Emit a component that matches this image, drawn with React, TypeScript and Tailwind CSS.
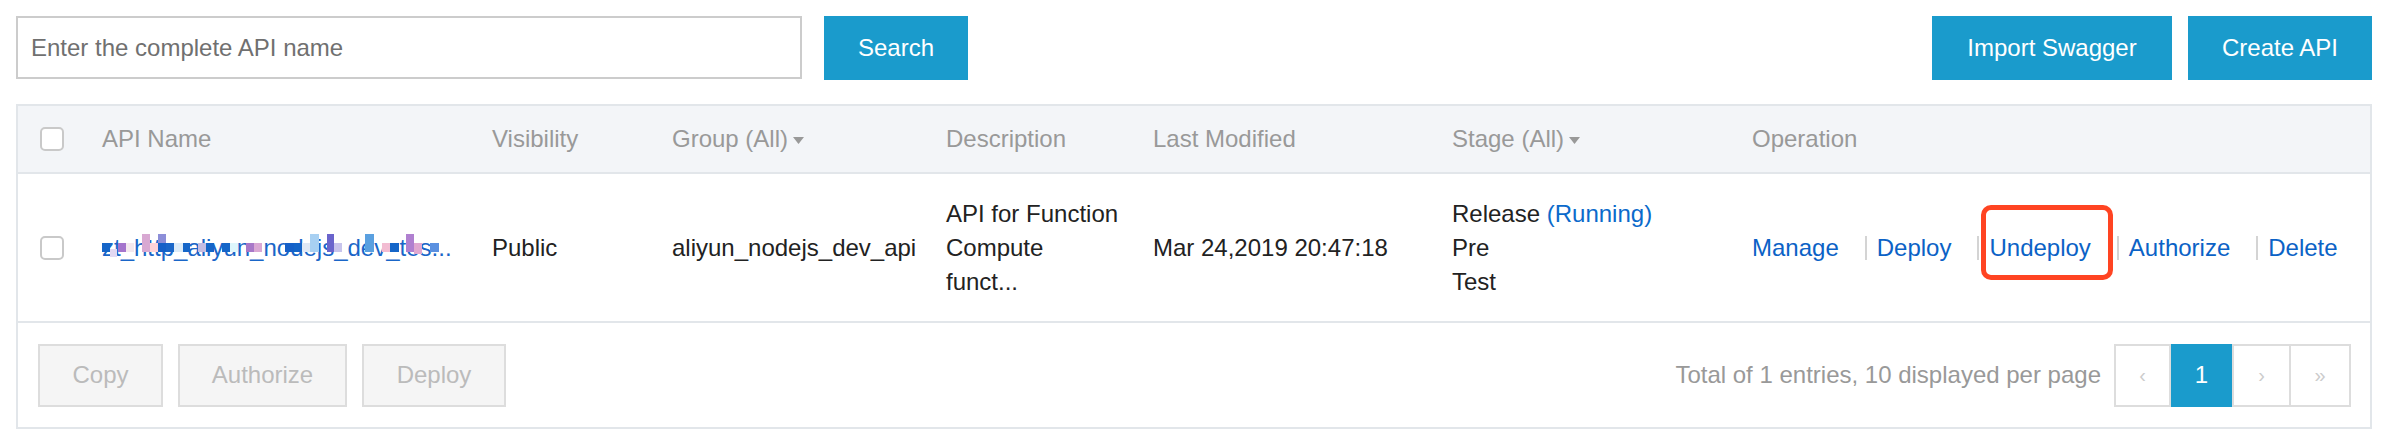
import React from "react";

const blocks: [number, number, number, number, string][] = [
  [0, 12, 8, 9, "#1565c8"],
  [8, 18, 7, 8, "#e2d8f2"],
  [16, 12, 8, 9, "#a474cc"],
  [24, 12, 8, 9, "#f4e8ee"],
  [40, 3, 8, 18, "#d8a8d2"],
  [48, 12, 8, 9, "#fdd3d8"],
  [56, 3, 8, 9, "#8c8ed8"],
  [56, 12, 8, 9, "#1560c8"],
  [64, 12, 8, 9, "#1a66c8"],
  [72, 12, 9, 9, "#dcebf8"],
  [81, 12, 7, 9, "#1565c8"],
  [96, 12, 8, 9, "#c4bce2"],
  [104, 12, 8, 9, "#1565c8"],
  [120, 12, 8, 9, "#1565c8"],
  [128, 12, 8, 9, "#ddf6fc"],
  [144, 12, 8, 9, "#a878c8"],
  [152, 12, 8, 9, "#daa8d4"],
  [183, 12, 9, 9, "#1560c8"],
  [192, 12, 8, 9, "#1565c8"],
  [200, 12, 8, 9, "#e0e8f4"],
  [208, 3, 9, 18, "#a8d0f2"],
  [225, 3, 7, 18, "#6a64cc"],
  [232, 12, 8, 9, "#c8c4ec"],
  [263, 3, 9, 18, "#5aa0e0"],
  [280, 12, 8, 9, "#f2bcd2"],
  [288, 12, 9, 9, "#1565c8"],
  [304, 3, 8, 18, "#b080d0"],
  [312, 12, 8, 11, "#e0a8d0"],
  [328, 12, 9, 9, "#5a90e0"],
];

function Caret() {
  return (
    <svg width="11" height="7" viewBox="0 0 11 7" className="ml-[5px] mt-[2px]">
      <path d="M0 0 L11 0 L5.5 7 Z" fill="#999999" />
    </svg>
  );
}

function Checkbox() {
  return <div className="w-[24px] h-[24px] border-2 border-[#c9c9c9] rounded-[5px] bg-white" />;
}

function Sep() {
  return <span className="inline-block w-[2px] h-[24px] bg-[#d4d4d4] ml-[26px] mr-[10px]" />;
}

export default function App() {
  return (
    <div className="w-[2386px] h-[434px] bg-white font-['Liberation_Sans',Arial,sans-serif] text-[24px] text-[#222222]">
      {/* Top bar */}
      <div className="flex items-start pt-[16px] pl-[16px] pr-[14px]">
        <input
          readOnly
          placeholder="Enter the complete API name"
          className="w-[786px] h-[63px] border-2 border-[#cccccc] px-[13px] text-[24px] outline-none placeholder:text-[#707070] bg-white"
        />
        <button className="ml-[22px] h-[64px] w-[144px] bg-[#1a9bcc] text-white text-[24px]">Search</button>
        <div className="flex-1" />
        <button className="h-[64px] w-[240px] bg-[#1a9bcc] text-white text-[24px]">Import Swagger</button>
        <button className="ml-[16px] h-[64px] w-[184px] bg-[#1a9bcc] text-white text-[24px]">Create API</button>
      </div>

      {/* Table */}
      <div className="mt-[24px] ml-[16px] mr-[14px] border-2 border-[#e2e6ea]">
        {/* Header */}
        <div className="grid grid-cols-[84px_390px_180px_274px_207px_299px_300px_1fr] h-[68px] items-center bg-[#f3f5f8] border-b-2 border-[#e2e6ea] text-[#999999]">
          <div className="pl-[22px]"><Checkbox /></div>
          <div>API Name</div>
          <div>Visibility</div>
          <div className="flex items-center">Group (All)<Caret /></div>
          <div>Description</div>
          <div>Last Modified</div>
          <div className="flex items-center">Stage (All)<Caret /></div>
          <div>Operation</div>
        </div>

        {/* Body row */}
        <div className="grid grid-cols-[84px_390px_180px_274px_207px_299px_300px_1fr] h-[149px] items-center border-b-2 border-[#e2e6ea] leading-[34px]">
          <div className="pl-[22px]"><Checkbox /></div>
          <div>
            <span className="relative inline-block whitespace-nowrap text-[#1a66c8]">
              zt_http_aliyun_nodejs_dev_tes...
              {blocks.map(([x, y, w, h, c], i) => (
                <span
                  key={i}
                  className="absolute"
                  style={{ left: x, top: y, width: w, height: h, background: c }}
                />
              ))}
            </span>
          </div>
          <div>Public</div>
          <div>aliyun_nodejs_dev_api</div>
          <div>
            <div>API for Function</div>
            <div>Compute</div>
            <div>funct...</div>
          </div>
          <div>Mar 24,2019 20:47:18</div>
          <div>
            <div>
              Release <span className="text-[#0b6acb]">(Running)</span>
            </div>
            <div>Pre</div>
            <div>Test</div>
          </div>
          <div className="flex items-center text-[#0b62c6]">
            <span>Manage</span>
            <Sep />
            <span>Deploy</span>
            <Sep />
            <span className="relative">
              Undeploy
              <span className="absolute left-[-8px] right-[-22px] top-[-26px] bottom-[-15px] border-[5px] border-[#ff4422] rounded-[10px]" />
            </span>
            <Sep />
            <span>Authorize</span>
            <Sep />
            <span>Delete</span>
          </div>
        </div>

        {/* Footer */}
        <div className="flex items-center justify-between h-[104px] pl-[20px] pr-[19px]">
          <div className="flex gap-[15px]">
            <button className="w-[125px] h-[63px] border-2 border-[#dddddd] bg-[#f5f5f5] text-[#bbbbbb] text-[24px]">Copy</button>
            <button className="w-[169px] h-[63px] border-2 border-[#dddddd] bg-[#f5f5f5] text-[#bbbbbb] text-[24px]">Authorize</button>
            <button className="w-[144px] h-[63px] border-2 border-[#dddddd] bg-[#f5f5f5] text-[#bbbbbb] text-[24px]">Deploy</button>
          </div>
          <div className="flex items-center">
            <span className="text-[#999999] mr-[13px]">Total of 1 entries, 10 displayed per page</span>
            <div className="flex h-[63px]">
              <div className="w-[57px] border-2 border-[#dddddd] flex items-center justify-center text-[#cccccc] text-[20px]">‹</div>
              <div className="w-[61px] bg-[#1a9bcc] flex items-center justify-center text-white">1</div>
              <div className="w-[57px] border-2 border-r-0 border-[#dddddd] flex items-center justify-center text-[#cccccc] text-[20px]">›</div>
              <div className="w-[62px] border-2 border-[#dddddd] flex items-center justify-center text-[#cccccc] text-[20px]">»</div>
            </div>
          </div>
        </div>
      </div>
    </div>
  );
}
